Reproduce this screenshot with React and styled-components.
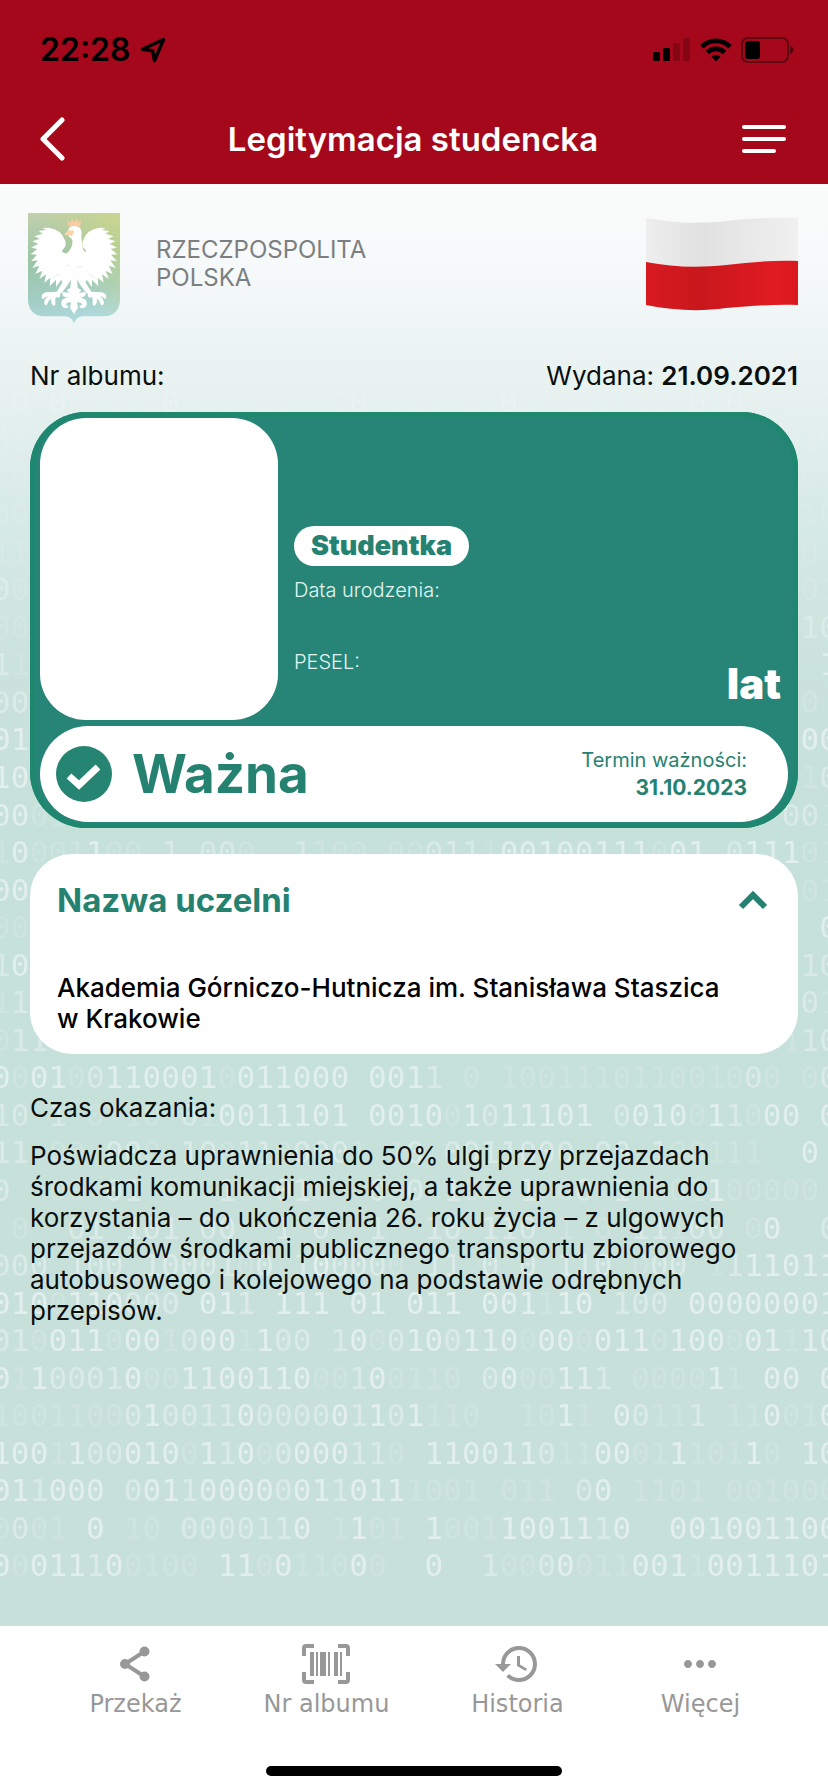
import React, { useState } from "react";
import styled, { createGlobalStyle } from "styled-components";
import { MdHistory, MdMoreHoriz } from "react-icons/md";

const GlobalStyle = createGlobalStyle`
  * { box-sizing: border-box; }
  body {
    margin: 0;
    background: #fff;
    color: #0a0f0e;
    font-family: Inter, "Liberation Sans", sans-serif;
  }
  button { font: inherit; color: inherit; background: none; border: 0; padding: 0; cursor: pointer; }
  h1, h2, p { margin: 0; }
  svg { display: block; }
`;

const Page = styled.div`
  min-height: 100vh;
  display: flex;
  flex-direction: column;
`;

const Header = styled.header`
  background: #a5081b;
`;

const StatusBar = styled.div`
  display: flex;
  align-items: center;
  justify-content: space-between;
  height: 100px;
  padding: 0 34px 0 40px;
  color: #000;
`;

const StatusGroup = styled.div`
  display: flex;
  align-items: center;
  gap: 9px;
`;

const Clock = styled.span`
  font-size: 32px;
  font-weight: 600;
  line-height: 36px;
`;

const NavBar = styled.div`
  display: flex;
  align-items: center;
  justify-content: space-between;
  height: 84px;
  padding: 0 42px 6px 40px;
  color: #fff;
`;

const Title = styled.h1`
  font-size: 33px;
  font-weight: 600;
  line-height: 40px;
`;

const IconButton = styled.button`
  display: flex;
  align-items: center;
  width: 44px;
  height: 44px;
`;

const Main = styled.main`
  position: relative;
  z-index: 0;
  overflow: hidden;
  flex: 1;
  padding: 29px 30px 40px;
  background: linear-gradient(#fafbfb 0%, #f6f9fa 6%, #eef5f5 10%, #e6f1ef 15%, #d7eae6 23%, #cbe2dd 33%, #c6e0da 45%, #c8e0db 100%);
`;

const Backdrop = styled.div`
  position: absolute;
  z-index: -1;
  inset: 162px -10px 41px -8px;
  display: grid;
  grid-auto-rows: 1fr;
  font-family: "DejaVu Sans Mono", monospace;
  font-size: 31px;
  line-height: 37px;
  color: #fff;
  mask-image: linear-gradient(rgba(0, 0, 0, 0.3), #000 30%);
`;

const BinaryRow = styled.div`
  display: grid;
  grid-template-columns: repeat(45, minmax(0, 1fr));
  justify-items: center;
`;

const Digit = styled.span`
  opacity: ${(p) => p.$opacity};
`;

const Issuer = styled.div`
  display: flex;
  align-items: center;
  justify-content: space-between;
  height: 110px;
  margin: 0 0 38px -2px;
`;

const IssuerName = styled.p`
  flex: 1;
  padding: 0 0 9px 36px;
  font-size: 24px;
  line-height: 28px;
  color: #7c7f80;
`;

const FlagHolder = styled.div`
  padding-bottom: 8px;
`;

const MetaRow = styled.div`
  display: flex;
  justify-content: space-between;
  margin-bottom: 21px;
  font-size: 26px;
  line-height: 30px;
`;

const Strong = styled.strong`
  font-weight: 600;
`;

const IdCard = styled.section`
  display: flex;
  flex-direction: column;
  gap: 6px;
  padding: 6px 10px;
  border-radius: 56px;
  background: #268577;
  box-shadow: inset 0 0 0 5px #1f866f;
`;

const IdTop = styled.div`
  display: flex;
  gap: 16px;
`;

const Photo = styled.div`
  flex: none;
  width: 238px;
  height: 302px;
  border-radius: 46px;
  background: #fff;
`;

const IdDetails = styled.div`
  flex: 1;
  display: flex;
  flex-direction: column;
  align-items: flex-start;
  padding-top: 108px;
  color: #fff;
`;

const Badge = styled.span`
  padding: 0 17px;
  margin-bottom: 12px;
  border-radius: 20px;
  background: #fff;
  color: #268270;
  font-size: 27px;
  font-weight: 900;
  line-height: 40px;
`;

const FieldLabel = styled.span`
  font-size: 20px;
  font-weight: 300;
  line-height: 24px;
  color: #e2f5f0;
`;

const DetailsFoot = styled.div`
  align-self: stretch;
  display: flex;
  justify-content: space-between;
  margin-top: 48px;
`;

const Age = styled.span`
  padding: 10px 7px 0 0;
  font-size: 42px;
  font-weight: 900;
  line-height: 48px;
`;

const Validity = styled.div`
  display: flex;
  align-items: center;
  justify-content: space-between;
  height: 96px;
  padding: 0 41px 0 16px;
  border-radius: 48px;
  background: #fff;
  color: #268270;
`;

const ValidityState = styled.div`
  display: flex;
  align-items: center;
  gap: 20px;
  font-size: 53px;
  font-weight: 700;
  line-height: 64px;
`;

const ValidityTerm = styled.div`
  display: flex;
  flex-direction: column;
  align-items: flex-end;
  font-size: 20px;
  line-height: 28px;
`;

const TermDate = styled.strong`
  font-size: 21px;
  font-weight: 700;
`;

const Panel = styled.section`
  margin-top: 26px;
  padding: 26px 30px 14px 27px;
  border-radius: 42px;
  background: #fff;
`;

const PanelToggle = styled.button`
  display: flex;
  align-items: center;
  justify-content: space-between;
  width: 100%;
  color: #268270;
  font-size: 33px;
  font-weight: 700;
  line-height: 40px;
`;

const PanelText = styled.p`
  padding: 52px 0 6px;
  color: #000;
  font-size: 26px;
  font-weight: 500;
  line-height: 31px;
`;

const Note = styled.p`
  max-width: 720px;
  margin-top: ${(p) => (p.$first ? 38 : 17)}px;
  font-size: 26px;
  line-height: 31px;
`;

const TabBar = styled.nav`
  background: #fff;
  color: #989898;
`;

const Tabs = styled.div`
  display: grid;
  grid-template-columns: 12fr 12fr 12fr 11fr;
  padding: 13px 40px 0;
`;

const Tab = styled.button`
  display: flex;
  flex-direction: column;
  align-items: center;
  font-family: "DejaVu Sans", sans-serif;
  font-size: 24px;
  line-height: 30px;
`;

const TabIcon = styled.span`
  display: flex;
  align-items: center;
  height: 50px;
`;

const HomeIndicator = styled.div`
  width: 296px;
  height: 10px;
  margin: 47px auto 16px;
  border-radius: 5px;
  background: #000;
`;

/* 0/1 bright, O/I medium, o/i faint */
const side = (left, right) => left.padEnd(42) + right;
const ROWS = [
  "oi oIo oo  ioio ooi oi  ooi oo io  ooi oi oo ",
  "oO Oo oioO oi ooi oO ioo oiOo ooi io OiOo oio",
  side("oi", "oio"),
  side("io", "ooi"),
  side("oo", "oio"),
  side("ii", "io "),
  side("Oo", "ooi"),
  side("oo", "oIO"),
  side("Ii", "  1"),
  side("OO", " o "),
  side("01", " 00"),
  side("10", " iO"),
  side("00oi", "OOi"),
  "i0ooi1oo I OOo  Iioo ooOIIi00100111o01 O111oi",
  side("00", " oi"),
  side("oo", "  0"),
  side("I0", " IO"),
  side("iI", " Oi"),
  side("oIIi", "iIO"),
  "0o01oO110001o011000 001I o iooiiioiiooioOo oO",
  "IO I o io Oi0011101 0010o1O11101 O010o1Io00 0",
  "II oo OOo IOoIIoOOOi iO OOIIOOO OO Iooiii  0 ",
  "O  oo OI oo Io OIo  OoO Ioo I oO I ooi1ooooo ",
  " o  OI IOI OO  I O  I  IO IIO i o IIiOO o0  O",
  "OOO IOO IOOOIoO I0OOOo II O O IIO oOO iI11011",
  "010o110OOO 01I 111 01 011 001i10 IOO 00000001",
  "OIo011o00iO00i1OO I0oO10O110o00o011o100o01i10",
  "0i1OOOI0oo1100110ooI0oiio O0oo11I oooo1i 00 0",
  "iooiiooO1OOII0OOOO0I1O1iio  io1i 0OiiI ii0oi0",
  "100i1OO010o1I0oO000IIo 110011Oii00oi1ioi1o 10",
  "01I000 O01I0000O01I011iooi oii O0 iioi ooiooo",
  "oOoi 0 io OOOOII0 i1oi 1ooi10011I0  001001100",
  "0o011I0oioo 11o0iio0o  0  IooO0oii001i0011101",
];

const SHADES = { 0: 0.48, 1: 0.48, O: 0.34, I: 0.34, o: 0.14, i: 0.14, " ": 0 };
const GLYPHS = { O: "0", I: "1", o: "0", i: "1" };

function BinaryBackdrop() {
  return (
    <Backdrop aria-hidden="true">
      {ROWS.map((row, r) => (
        <BinaryRow key={r}>
          {[...row].map((c, i) => (
            <Digit key={i} $opacity={SHADES[c]}>{GLYPHS[c] || c}</Digit>
          ))}
        </BinaryRow>
      ))}
    </Backdrop>
  );
}

const LocationIcon = () => (
  <svg width="26" height="26" viewBox="0 0 26 26" fill="none" stroke="#000" strokeWidth="3.4" strokeLinejoin="round">
    <path d="M23.5 2.5 2.500 12.300l10.200 1.400 1.800 10z" />
  </svg>
);

const SignalIcon = () => (
  <svg width="38" height="24" viewBox="0 0 38 24">
    <rect x="0" y="14" width="7" height="9" rx="1.5" />
    <rect x="10" y="10" width="7" height="13" rx="1.5" />
    <rect x="20" y="5" width="7" height="18" rx="1.5" opacity=".2" />
    <rect x="30" y="0" width="7" height="23" rx="1.5" opacity=".2" />
  </svg>
);

const WifiIcon = () => (
  <svg width="32" height="24" viewBox="0 0 32 24" fill="none" stroke="#000" strokeWidth="4.8">
    <path d="M1.8 8.8a20 20 0 0 1 28.4 0" />
    <path d="M7.4 14.5a12.2 12.2 0 0 1 17.2 0" />
    <path d="M16 23.5l-4.6-4.7a6.6 6.6 0 0 1 9.2 0z" fill="#000" stroke="none" />
  </svg>
);

const BatteryIcon = () => (
  <svg width="53" height="26" viewBox="0 0 53 26">
    <rect x="1" y="1" width="46" height="24" rx="6" fill="none" stroke="#000" strokeOpacity=".42" strokeWidth="2" />
    <rect x="4" y="4" width="15" height="18" rx="3" />
    <path d="M49 9c3 1 3.5 2.500 3.500 4s-.5 3-3.500 4z" opacity=".45" />
  </svg>
);

const BackIcon = () => (
  <svg width="26" height="44" viewBox="0 0 26 44" fill="none" stroke="#fff" strokeWidth="5" strokeLinecap="round" strokeLinejoin="round">
    <path d="M22 3 3 22l19 19" />
  </svg>
);

const MenuIcon = () => (
  <svg width="44" height="30" viewBox="0 0 44 30" stroke="#fff" strokeWidth="4" strokeLinecap="round">
    <path d="M2 3h40M2 15h40M2 27h30" />
  </svg>
);

const WING =
  "M224 200 204 192 188 186Q184 180 190 176 202 164 194 148 184 118 146 112L128 113 138 119 116 122 128 130 103 138 120 145 97 153 115 160 93 172 112 176 92 192 111 193 93 213 113 210 97 233 118 226 106 251 127 241 118 266 138 252 133 277 151 262 149 288 168 268 168 291 184 268 190 284 204 262 224 250Z";
const LEG =
  "M206 250 184 282 170 304 150 306Q138 302 127 312 122 322 129 326 137 318 145 318 131 326 133 341 139 349 143 339 146 329 154 325 151 338 160 346 168 346 166 334 164 325 169 320 182 326 180 312 200 292 216 262Z";
const TAIL =
  "M214 250 211 292 200 300 207 308 188 304Q183 314 194 320L204 319 187 328Q180 340 188 350 196 358 206 350 202 344 196 342 204 334 213 336L210 352 222 371 222 250Z";
const SHIELD =
  "M84 68H360V328Q358 376 310 378H246Q230 380 222 398 214 380 198 378H134Q86 376 84 328Z";

const Emblem = () => (
  <svg width="92" height="110" viewBox="84 68 276 330" role="img" aria-label="Godło">
    <defs>
      <linearGradient id="shield" x1="0" y1="0" x2="0.15" y2="1">
        <stop offset="0" stopColor="#c2cfae" />
        <stop offset="0.45" stopColor="#9ac5a6" />
        <stop offset="0.8" stopColor="#a3cec6" />
        <stop offset="1" stopColor="#aed8da" />
      </linearGradient>
      <linearGradient id="sheen" x1="0.4" y1="0.5" x2="1" y2="0">
        <stop offset="0" stopColor="#d3da80" stopOpacity="0" />
        <stop offset="1" stopColor="#d3da80" stopOpacity="0.7" />
      </linearGradient>
    </defs>
    <path d={SHIELD} fill="url(#shield)" />
    <path d={SHIELD} fill="url(#sheen)" />
    <g fill="#fff">
      <path d={WING} />
      <path d={LEG} />
      <path d={TAIL} />
      <g transform="translate(444 0) scale(-1 1)">
        <path d={WING} />
        <path d={LEG} />
        <path d={TAIL} />
      </g>
      <path d="M205 120Q207 106 226 107 245 110 245 128 242 150 250 178L266 200H184Q214 184 217 160 220 146 206 138Z" />
    </g>
    <path d="M206 109 201 91 211 97 216 86 223 95 230 85 235 96 244 90 240 110Q222 103 206 109Z" fill="#fbcba4" />
    <path d="M211 120Q195 121 194 137L204 133 216 137Q224 128 220 120Z" fill="#fbd3ac" />
    <path d="M196 228Q206 218 213 232M231 234Q239 222 248 232M160 262 178 250M284 262 266 250" fill="none" stroke="#d9e8e3" strokeWidth="2" />
  </svg>
);

const Flag = () => (
  <svg width="152" height="94" viewBox="0 0 152 94" role="img" aria-label="Flaga Polski">
    <defs>
      <linearGradient id="flagWhite">
        <stop offset="0" stopColor="#eeeeee" />
        <stop offset="0.35" stopColor="#e1e1e1" />
        <stop offset="1" stopColor="#f0f0f0" />
      </linearGradient>
      <linearGradient id="flagRed">
        <stop offset="0" stopColor="#d81a20" />
        <stop offset="0.35" stopColor="#c8181d" />
        <stop offset="0.85" stopColor="#e11b22" />
        <stop offset="1" stopColor="#d9191f" />
      </linearGradient>
    </defs>
    <path d="M0 1C26 6 52 7 80 4 105 1 128 0 152 1V46L80 52 0 47Z" fill="url(#flagWhite)" />
    <path d="M0 45C26 50 52 51 80 48 105 45 128 43 152 44V88C128 87 105 89 80 91 52 95 26 93 0 88Z" fill="url(#flagRed)" />
  </svg>
);

const CheckIcon = () => (
  <svg width="56" height="56" viewBox="0 0 56 56">
    <circle cx="28" cy="28" r="28" fill="#268572" />
    <path d="M13 30l10 9 19-18" fill="none" stroke="#fff" strokeWidth="7" />
  </svg>
);

const ChevronIcon = () => (
  <svg width="30" height="20" viewBox="0 0 30 20" fill="none" stroke="#268270" strokeWidth="6">
    <path d="M3 17 15 5l12 12" />
  </svg>
);

const ShareIcon = () => (
  <svg width="30" height="36" viewBox="0 0 30 36" fill="currentColor">
    <path d="M24.500 5.500 5 18l19.500 12.500" fill="none" stroke="currentColor" strokeWidth="4" />
    <circle cx="24.500" cy="5.500" r="5" />
    <circle cx="5" cy="18" r="5" />
    <circle cx="24.500" cy="30.500" r="5" />
  </svg>
);

const BarcodeIcon = () => (
  <svg width="48" height="48" viewBox="0 0 24 24" fill="currentColor">
    <path d="M4 6h2v12H4zM7 6h1v12H7zM9 6h3v12H9zM13 6h1v12h-1zM16 6h2v12h-2zM19 6h1v12h-1zM2 4v4H0V4a2 2 0 0 1 2-2h4v2zM22 2a2 2 0 0 1 2 2v4h-2V4h-4V2zM2 16v4h4v2H2a2 2 0 0 1-2-2v-4zM22 20v-4h2v4a2 2 0 0 1-2 2h-4v-2z" />
  </svg>
);

const TABS = [
  { label: "Przekaż", icon: <ShareIcon /> },
  { label: "Nr albumu", icon: <BarcodeIcon /> },
  { label: "Historia", icon: <MdHistory size={48} /> },
  { label: "Więcej", icon: <MdMoreHoriz size={48} /> },
];

export default function App() {
  const [open, setOpen] = useState(true);
  return (
    <Page>
      <GlobalStyle />
      <Header>
        <StatusBar>
          <StatusGroup>
            <Clock>22:28</Clock>
            <LocationIcon />
          </StatusGroup>
          <StatusGroup>
            <SignalIcon />
            <WifiIcon />
            <BatteryIcon />
          </StatusGroup>
        </StatusBar>
        <NavBar>
          <IconButton aria-label="Wstecz"><BackIcon /></IconButton>
          <Title>Legitymacja studencka</Title>
          <IconButton aria-label="Menu"><MenuIcon /></IconButton>
        </NavBar>
      </Header>

      <Main>
        <BinaryBackdrop />
        <Issuer>
          <Emblem />
          <IssuerName>RZECZPOSPOLITA<br />POLSKA</IssuerName>
          <FlagHolder><Flag /></FlagHolder>
        </Issuer>
        <MetaRow>
          <span>Nr albumu:</span>
          <span>Wydana: <Strong>21.09.2021</Strong></span>
        </MetaRow>

        <IdCard>
          <IdTop>
            <Photo />
            <IdDetails>
              <Badge>Studentka</Badge>
              <FieldLabel>Data urodzenia:</FieldLabel>
              <DetailsFoot>
                <FieldLabel>PESEL:</FieldLabel>
                <Age>lat</Age>
              </DetailsFoot>
            </IdDetails>
          </IdTop>
          <Validity>
            <ValidityState><CheckIcon />Ważna</ValidityState>
            <ValidityTerm>
              <span>Termin ważności:</span>
              <TermDate>31.10.2023</TermDate>
            </ValidityTerm>
          </Validity>
        </IdCard>

        <Panel>
          <h2>
            <PanelToggle aria-expanded={open} onClick={() => setOpen(!open)}>
              Nazwa uczelni
              <ChevronIcon />
            </PanelToggle>
          </h2>
          {open && (
            <PanelText>Akademia Górniczo-Hutnicza im. Stanisława Staszica<br />w Krakowie</PanelText>
          )}
        </Panel>

        <Note $first>Czas okazania:</Note>
        <Note>
          Poświadcza uprawnienia do 50% ulgi przy przejazdach środkami komunikacji miejskiej, a także
          uprawnienia do korzystania – do ukończenia 26. roku życia – z ulgowych przejazdów środkami
          publicznego transportu zbiorowego autobusowego i kolejowego na podstawie odrębnych przepisów.
        </Note>
      </Main>

      <TabBar>
        <Tabs>
          {TABS.map((t) => (
            <Tab key={t.label}>
              <TabIcon>{t.icon}</TabIcon>
              {t.label}
            </Tab>
          ))}
        </Tabs>
        <HomeIndicator />
      </TabBar>
    </Page>
  );
}
